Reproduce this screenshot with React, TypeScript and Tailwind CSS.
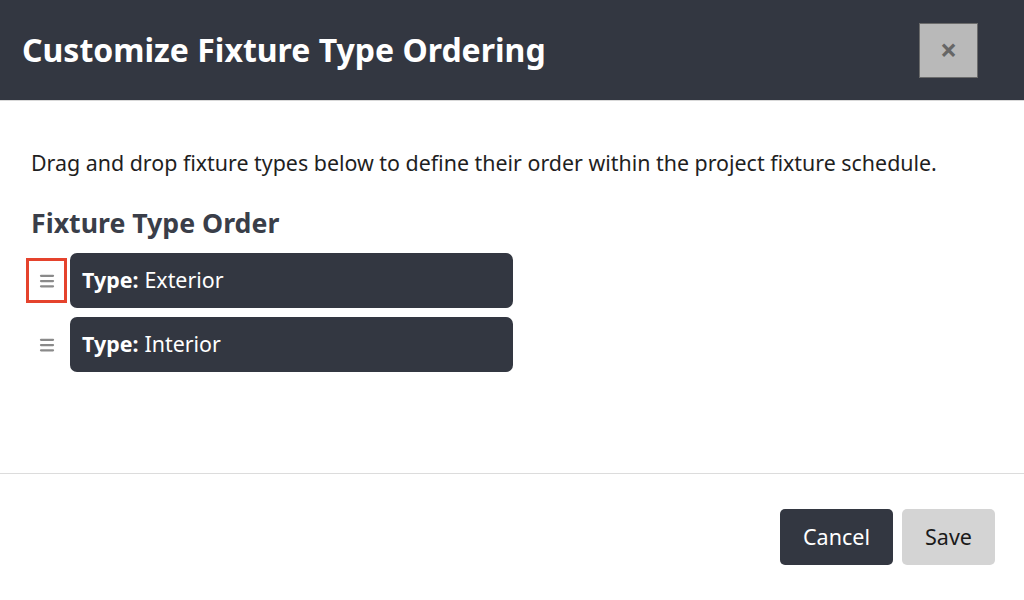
import { Menu } from 'lucide-react'

const fixtureTypes = [
  { label: "Exterior", active: true },
  { label: "Interior", active: false },
]

export default function App() {
  return (
    <div className="w-[1024px] h-[600px] bg-white flex flex-col font-['Noto_Sans',sans-serif] overflow-hidden">
      {/* Header */}
      <div className="h-[101px] bg-[#333741] border-b border-[#d9d9d9] flex items-center justify-between pl-[22px] pr-[46px] shrink-0">
        <h1 className="text-[32px] font-bold text-white">Customize Fixture Type Ordering</h1>
        <button className="w-[59px] h-[55px] bg-[#b9b9b9] border border-[#6b6b6b] flex items-center justify-center text-[#666] text-[30px] font-bold leading-none">
          ×
        </button>
      </div>

      {/* Body */}
      <div className="h-[373px] border-b border-[#dcdcdc] px-[31px] pt-[48px] shrink-0">
        <p className="text-[21.4px] text-[#1f1f1f] leading-[28px] whitespace-nowrap">
          Drag and drop fixture types below to define their order within the project fixture schedule.
        </p>
        <h2 className="mt-[29px] text-[26.7px] font-bold text-[#3a3e49] leading-[34px]">Fixture Type Order</h2>
        <div className="mt-[13px] -ml-[5px] flex flex-col gap-[9px]">
          {fixtureTypes.map((item) => (
            <div key={item.label} className="flex items-center gap-[3px]">
              <div
                className={
                  item.active
                    ? "w-[41px] h-[45px] border-[3px] border-[#e5432d] flex items-center justify-center"
                    : "w-[41px] h-[45px] border-[3px] border-transparent flex items-center justify-center"
                }
              >
                <Menu className="w-[18px] h-[18px] text-[#8a8a8a]" strokeWidth={3} />
              </div>
              <div className="w-[443px] h-[55px] bg-[#333741] rounded-[7px] flex items-center px-[12px] text-white text-[21.4px]">
                <span className="font-bold mr-[6px]">Type:</span>
                <span>{item.label}</span>
              </div>
            </div>
          ))}
        </div>
      </div>

      {/* Footer */}
      <div className="flex justify-end gap-[9px] pt-[35px] pr-[29px]">
        <button className="w-[113px] h-[56px] bg-[#333741] text-white text-[21.5px] rounded-[5px]">Cancel</button>
        <button className="w-[93px] h-[56px] bg-[#d4d4d4] text-[#1a1a1a] text-[21.5px] rounded-[5px]">Save</button>
      </div>
    </div>
  )
}
